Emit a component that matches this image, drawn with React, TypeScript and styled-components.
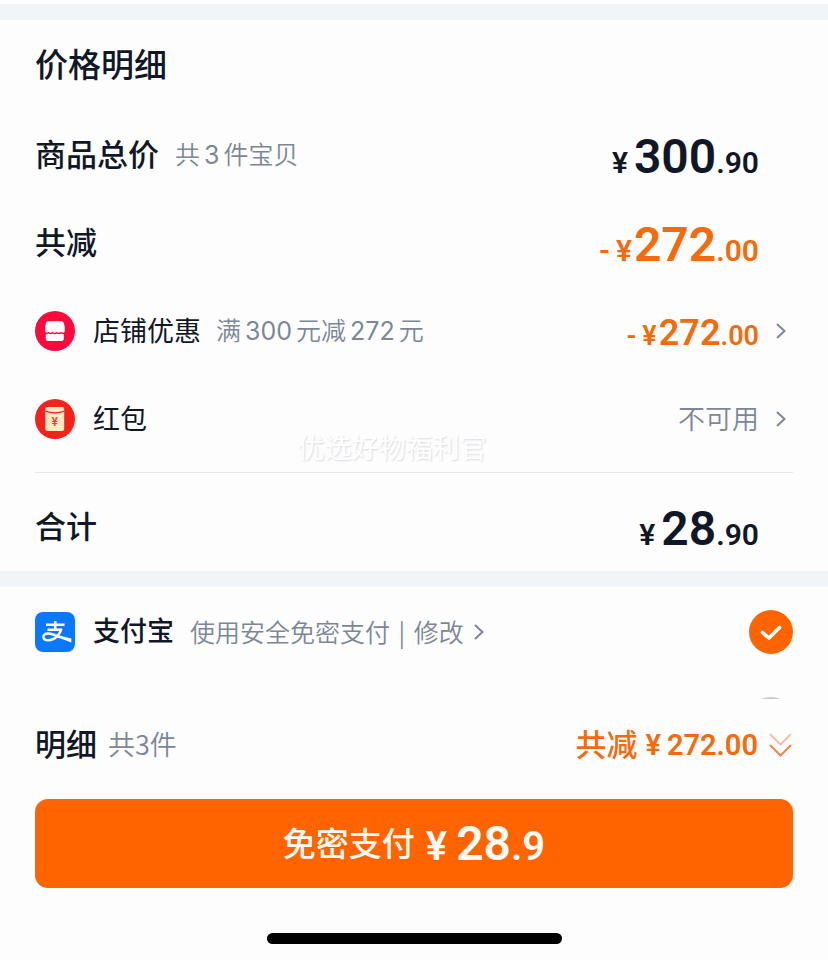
import React from "react";
import styled, { createGlobalStyle, css } from "styled-components";

const ink = "#101828";
const muted = "#7b8799";
const orange = "#ff6400";
const priceOrange = "#f56a0c";

const cjk = `"Noto Sans CJK SC", sans-serif`;

const GlobalStyle = createGlobalStyle`
  *, *::before, *::after { box-sizing: border-box; }
  body {
    margin: 0;
    background: #fdfdfe;
    color: ${ink};
    font-family: ${cjk};
  }
  button { font: inherit; color: inherit; border: 0; background: none; padding: 0; cursor: pointer; }
  h2, p { margin: 0; font-weight: inherit; }
`;

const Page = styled.main`
  display: flex;
  flex-direction: column;
  min-height: 100vh;
  padding-top: 4px;
`;

const Band = styled.div`
  height: 16px;
  background: #f2f5f8;
`;

const Section = styled.section`
  position: relative;
  padding: 0 35px;
`;

const Title = styled.h2`
  padding-bottom: 4px;
  font-size: 33px;
  line-height: 87px;
  font-weight: 500;
`;

const Row = styled.div<{ $total?: boolean }>`
  display: flex;
  align-items: center;
  justify-content: space-between;
  height: 88px;
  ${(p) =>
    p.$total &&
    css`
      height: 98px;
      padding-top: 10px;
    `}
`;

const Side = styled.div<{ $gap: number }>`
  display: flex;
  align-items: center;
  gap: ${(p) => p.$gap}px;
`;

const Label = styled.span<{ $size: number; $weight: number }>`
  padding-bottom: ${(p) => (p.$weight === 500 ? 4 : 2)}px;
  font-family: ${cjk};
  font-size: ${(p) => p.$size}px;
  line-height: 40px;
  font-weight: ${(p) => p.$weight};
`;

const Note = styled.span<{ $size?: number }>`
  padding-bottom: 2px;
  font-size: ${(p) => p.$size ?? 25}px;
  line-height: 40px;
  font-weight: 350;
  color: ${muted};
`;

const Num = styled.span`
  margin: 0 4px;
  font-family: Inter, ${cjk};
  font-weight: 400;
`;

const Pipe = styled.span`
  margin: 0 3px;
`;

const PriceBox = styled.span<{ $tone?: "orange" }>`
  display: flex;
  align-items: baseline;
  padding-top: 4px;
  margin-right: 34px;
  font-family: Roboto, sans-serif;
  font-weight: 600;
  line-height: 1;
  color: ${(p) => (p.$tone ? priceOrange : ink)};
`;

const Sign = styled.span<{ $size: number; $gap: number }>`
  font-size: ${(p) => p.$size}px;
  margin-right: ${(p) => p.$gap}px;
`;

const Whole = styled.span<{ $size: number }>`
  font-size: ${(p) => p.$size}px;
`;

const RowAction = styled.button`
  display: flex;
  align-items: center;
  gap: 17px;
  padding-right: 7px;

  ${PriceBox} {
    margin-right: 0;
  }
`;

const Divider = styled.hr`
  height: 1px;
  margin: 9px 0 0;
  border: 0;
  background: #e4e6ea;
`;

const Watermark = styled.p`
  position: absolute;
  left: 0;
  right: 0;
  bottom: 104px;
  padding-right: 44px;
  text-align: center;
  font-size: 27px;
  line-height: 40px;
  color: #fff;
  text-shadow: 1px 1px 2px #d8dade;
  pointer-events: none;
`;

const PayRow = styled.div`
  display: flex;
  align-items: center;
  justify-content: space-between;
  height: 90px;
  padding: 0 35px;
`;

const PayLabel = styled.label`
  display: flex;
  align-items: center;
  gap: 18px;
`;

const EditLink = styled.a`
  display: flex;
  align-items: center;
  gap: 10px;
  color: ${muted};
  text-decoration: none;
`;

const RadioBox = styled.span`
  position: relative;
  display: block;
  width: 44px;
  height: 44px;

  svg {
    position: absolute;
    inset: 0;
    pointer-events: none;
  }
`;

const Radio = styled.input`
  appearance: none;
  display: block;
  width: 44px;
  height: 44px;
  margin: 0;
  border: 2px solid #c6cad1;
  border-radius: 50%;

  &:checked {
    border: 0;
    background: ${orange};
  }
`;

const NextOption = styled.div`
  display: flex;
  justify-content: flex-end;
  height: 22px;
  padding: 20px 35px 0;
  overflow: hidden;
`;

const EmptyCircle = styled.span`
  flex: none;
  width: 44px;
  height: 44px;
  border: 2px solid #c6cad1;
  border-radius: 50%;
`;

const Footer = styled.footer`
  padding: 0 35px 17px;
`;

const Summary = styled.div`
  display: flex;
  align-items: center;
  justify-content: space-between;
  height: 100px;
  padding-bottom: 8px;
`;

const SavedButton = styled.button`
  display: flex;
  align-items: center;
  gap: 10px;
  color: ${priceOrange};
`;

const Saved = styled.span`
  display: flex;
  align-items: center;
  font-family: Roboto, sans-serif;
  font-size: 29px;
  font-weight: 600;
`;

const SavedLabel = styled(Label)`
  margin-right: 8px;
`;

const PayButton = styled.button`
  display: flex;
  align-items: center;
  justify-content: center;
  width: 100%;
  height: 89px;
  border-radius: 13px;
  background: ${orange};
  color: #fffaf4;
`;

const PayAmount = styled.span`
  display: flex;
  align-items: baseline;
  margin-left: 11px;
  font-family: Roboto, sans-serif;
  font-weight: 600;
  line-height: 1;
`;

const HomeBar = styled.div`
  width: 39%;
  max-width: 295px;
  height: 11px;
  margin: 45px auto 0;
  border-radius: 6px;
  background: #000;
`;

function Chevron() {
  return (
    <svg width="10" height="18" viewBox="0 0 10 18" fill="none" aria-hidden="true">
      <path d="M1 2l7.5 7L1 16" stroke={muted} strokeWidth="2" />
    </svg>
  );
}

function ShopIcon() {
  return (
    <svg width="40" height="40" viewBox="0 0 40 40" aria-hidden="true">
      <circle cx="20" cy="20" r="20" fill="#fb0a3e" />
      <path
        d="M13.500 10.300h12.500c1.400 0 2.400.7 2.800 1.900l.9 3.300v4.500c0 1-.6 1.700-1.500 1.700-1 0-1.500-.2-2.200-.9-1.300 1.400-3 1.400-4.200 0-1.300 1.400-3 1.400-4.200 0-1.300 1.400-2.800 1.400-4 0-.6.700-1 .9-1.700.9-1 0-1.700-.7-1.700-1.700v-4.500l.7-3.300c.3-1.200 1.200-1.900 2.600-1.900z"
        fill="#fff"
      />
      <path
        d="M10.800 23.200c1 .2 1.900 0 2.800-.6 1.300.9 3 .9 4.200 0 1.300.9 3 .9 4.200 0 1.300.9 3 .9 4.200 0 .8.600 1.500.8 2.600.6v4.800c0 1.100-.8 1.900-1.900 1.900H12.700c-1.100 0-1.900-.8-1.900-1.900z"
        fill="#fff"
      />
    </svg>
  );
}

function PacketIcon() {
  return (
    <svg width="40" height="40" viewBox="0 0 40 40" aria-hidden="true">
      <circle cx="20" cy="20" r="20" fill="#f5221b" />
      <rect x="10.300" y="8" width="18.900" height="24" rx="2" fill="#ffe8c4" />
      <path d="M10.300 12c5 2.400 13.900 2.400 18.900 0" fill="none" stroke="#f5221b" strokeWidth="1.200" />
      <text
        x="19.800"
        y="27"
        textAnchor="middle"
        fontFamily="Roboto, sans-serif"
        fontSize="12"
        fontWeight="600"
        fill="#e8452c"
      >
        ¥
      </text>
    </svg>
  );
}

function AlipayIcon() {
  return (
    <svg width="40" height="40" viewBox="0 0 40 40" fill="none" aria-hidden="true">
      <rect width="40" height="40" rx="8" fill="#0a78ff" />
      <path
        d="M11 12.700h18.500M20.200 9v9M12.500 17.700h14.500"
        stroke="#fff"
        strokeWidth="2.600"
      />
      <path
        d="M26.500 17c-2 6-7 11.300-13 11.300-6.500 0-7-6.800-.5-6.800 4 0 8 2 12 3.800"
        stroke="#fff"
        strokeWidth="2.400"
      />
      <path d="M22 23l14.300 3.400v4.100L20.500 24.600z" fill="#fff" />
    </svg>
  );
}

function DoubleChevron() {
  return (
    <svg width="25" height="26" viewBox="0 0 25 26" fill="none" aria-hidden="true">
      <path d="M2 2l10.500 10.500L23 2" stroke="#f9bfa4" strokeWidth="2" />
      <path d="M2 13l10.500 10.500L23 13" stroke="#ef8450" strokeWidth="2" />
    </svg>
  );
}

type PriceProps = { whole: string; cents: string; minus?: boolean; small?: boolean };

function Price({ whole, cents, minus, small }: PriceProps) {
  const minor = small ? 27 : 30;
  return (
    <PriceBox $tone={minus ? "orange" : undefined}>
      {minus && <Sign $size={minor} $gap={6}>-</Sign>}
      <Sign $size={minor} $gap={minus ? 2 : 6}>¥</Sign>
      <Whole $size={small ? 36 : 48}>{whole}</Whole>
      <Whole $size={minor}>.{cents}</Whole>
    </PriceBox>
  );
}

export default function App() {
  return (
    <>
      <GlobalStyle />
      <Page>
        <Band />
        <Section>
          <Title>价格明细</Title>
          <Row>
            <Side $gap={16}>
              <Label $size={31} $weight={500}>商品总价</Label>
              <Note>共<Num>3</Num>件宝贝</Note>
            </Side>
            <Price whole="300" cents="90" />
          </Row>
          <Row>
            <Label $size={31} $weight={500}>共减</Label>
            <Price whole="272" cents="00" minus />
          </Row>
          <Row>
            <Side $gap={18}>
              <ShopIcon />
              <Side $gap={15}>
                <Label $size={27} $weight={400}>店铺优惠</Label>
                <Note>满<Num>300</Num>元减<Num>272</Num>元</Note>
              </Side>
            </Side>
            <RowAction type="button">
              <Price whole="272" cents="00" minus small />
              <Chevron />
            </RowAction>
          </Row>
          <Row>
            <Side $gap={18}>
              <PacketIcon />
              <Label $size={27} $weight={400}>红包</Label>
            </Side>
            <RowAction type="button">
              <Note $size={27}>不可用</Note>
              <Chevron />
            </RowAction>
          </Row>
          <Divider />
          <Row $total>
            <Label $size={31} $weight={500}>合计</Label>
            <Price whole="28" cents="90" />
          </Row>
          <Watermark>优选好物福利官</Watermark>
        </Section>
        <Band />
        <PayRow>
          <Side $gap={16}>
            <PayLabel htmlFor="alipay">
              <AlipayIcon />
              <Label $size={27} $weight={500}>支付宝</Label>
            </PayLabel>
            <EditLink href="#edit">
              <Note>使用安全免密支付<Pipe> | </Pipe>修改</Note>
              <Chevron />
            </EditLink>
          </Side>
          <RadioBox>
            <Radio type="radio" id="alipay" name="payment" defaultChecked />
            <svg width="44" height="44" viewBox="0 0 44 44" fill="none" aria-hidden="true">
              <path
                d="M13.500 22.500l6.500 5.500 10.500-10.500"
                stroke="#fff"
                strokeWidth="3.600"
                strokeLinecap="round"
                strokeLinejoin="round"
              />
            </svg>
          </RadioBox>
        </PayRow>
        <NextOption aria-hidden="true">
          <EmptyCircle />
        </NextOption>
        <Footer>
          <Summary>
            <Side $gap={11}>
              <Label $size={31} $weight={500}>明细</Label>
              <Note $size={27}>共3件</Note>
            </Side>
            <SavedButton type="button">
              <Saved>
                <SavedLabel $size={31} $weight={500}>共减</SavedLabel>
                <Sign $size={29} $gap={6}>¥</Sign>
                272.00
              </Saved>
              <DoubleChevron />
            </SavedButton>
          </Summary>
          <PayButton type="submit">
            <Label $size={33} $weight={500}>免密支付</Label>
            <PayAmount>
              <Sign $size={40} $gap={9}>¥</Sign>
              <Whole $size={48}>28</Whole>
              <Whole $size={40}>.9</Whole>
            </PayAmount>
          </PayButton>
          <HomeBar />
        </Footer>
      </Page>
    </>
  );
}
